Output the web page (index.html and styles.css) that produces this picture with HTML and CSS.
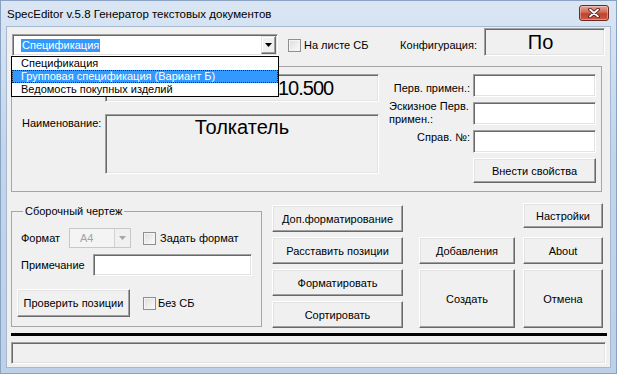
FILE: index.html
```html
<!DOCTYPE html>
<html lang="ru">
<head>
  <meta charset="UTF-8">
  <title>SpecEditor v.5.8</title>
  <link rel="stylesheet" href="styles.css">
</head>
<body>

<div class="window">
  <div class="titlebar">
    <span class="title">SpecEditor v.5.8 Генератор текстовых документов</span>
    <button class="btn-close">
      <svg width="12" height="10" viewBox="0 0 12 10">
        <path d="M2 1.5 L10 8.5 M10 1.5 L2 8.5" stroke="#4a1a12" stroke-width="3.6" stroke-linecap="round"/>
        <path d="M2 1.5 L10 8.5 M10 1.5 L2 8.5" stroke="#fff" stroke-width="1.8" stroke-linecap="round"/>
      </svg>
    </button>
  </div>

  <div class="client">
    <div class="toprow">
      <div class="combo">
        <span class="combo-text"><span class="sel">Спецификация</span></span>
        <span class="combo-btn">
          <svg width="7" height="4" viewBox="0 0 7 4"><path d="M0 0 H7 L3.5 4 Z" fill="#000"/></svg>
        </span>
        <ul class="dropdown">
          <li>Спецификация</li>
          <li class="active">Групповая спецификация (Вариант Б)</li>
          <li>Ведомость покупных изделий</li>
        </ul>
      </div>
      <label class="check top-check"><span class="box"></span>На листе СБ</label>
      <span class="config-label">Конфигурация:</span>
      <div class="sunken config-box">По</div>
    </div>

    <div class="frame props">
      <div class="props-left">
        <span></span>
        <div class="sunken number-box">10.500</div>
        <span class="name-label">Наименование:</span>
        <div class="sunken name-box">Толкатель</div>
      </div>
      <div class="props-right">
        <span class="lbl perv">Перв. примен.:</span>
        <div class="input"></div>
        <span class="lbl eskiz">Эскизное Перв.<br>примен.:</span>
        <div class="input"></div>
        <span class="lbl sprav">Справ. №:</span>
        <div class="input"></div>
        <span></span>
        <button class="btn">Внести свойства</button>
      </div>
    </div>

    <div class="bottom">
      <fieldset class="group">
        <legend>Сборочный чертеж</legend>
        <div class="fs-row r1">
          <span class="fmt-label">Формат</span>
          <div class="combo-off">
            <span class="off-text">А4</span>
            <span class="off-btn">
              <svg width="7" height="4" viewBox="0 0 7 4"><path d="M0 0 H7 L3.5 4 Z" fill="#a6a6a6"/></svg>
            </span>
          </div>
          <label class="check fmt-check"><span class="box"></span>Задать формат</label>
        </div>
        <div class="fs-row r2">
          <span class="note-label">Примечание</span>
          <div class="input note-input"></div>
        </div>
        <div class="fs-row r3">
          <button class="btn check-btn">Проверить позиции</button>
          <label class="check nosb-check"><span class="box"></span>Без СБ</label>
        </div>
      </fieldset>

      <div class="actions">
        <button class="btn a-dop">Доп.форматирование</button>
        <button class="btn a-nastr">Настройки</button>
        <button class="btn a-rass">Расставить позиции</button>
        <button class="btn a-dob">Добавления</button>
        <button class="btn a-about">About</button>
        <button class="btn a-fmt">Форматировать</button>
        <button class="btn a-create">Создать</button>
        <button class="btn a-cancel">Отмена</button>
        <button class="btn a-sort">Сортировать</button>
      </div>
    </div>

    <div class="divider"></div>
    <div class="sunken status"></div>
  </div>
</div>

</body>
</html>
```

FILE: styles.css
```css
* {
  box-sizing: border-box;
}

body {
  margin: 0;
  font-family: "Liberation Sans", Arial, sans-serif;
  font-size: 11px;
  color: #000;
  background: #fff;
}

/* окно */

.window {
  width: 617px;
  height: 374px;
  display: flex;
  flex-direction: column;
  background: linear-gradient(#dae6f4, #c3d5eb 40%, #bdd0e8);
  box-shadow: inset 0 0 0 1px #8aa3c2;
}

.titlebar {
  height: 27px;
  flex: none;
  display: flex;
  align-items: center;
  padding: 0 8px 0 7px;
}

.title {
  font-size: 11.5px;
}

.btn-close {
  margin-left: auto;
  align-self: flex-start;
  margin-top: 5px;
  width: 30px;
  height: 16px;
  padding: 0;
  border: 1px solid #6e2a22;
  border-radius: 3px;
  background: linear-gradient(#e9a493, #d06a57 45%, #c0422f 55%, #cf5b45);
  box-shadow: inset 0 0 0 1px rgba(255, 255, 255, 0.35);
  display: flex;
  align-items: center;
  justify-content: center;
}

.client {
  flex: 1;
  margin: 0 7px 7px;
  background: #f0f0f0;
  box-shadow: 0 0 0 1px #a6b8cf;
  display: flex;
  flex-direction: column;
}

/* общие элементы */

.sunken {
  border: 1px solid;
  border-color: #a0a0a0 #fff #fff #a0a0a0;
  box-shadow: inset 1px 1px 0 #696969, inset -1px -1px 0 #e3e3e3;
  background: #f0f0f0;
}

.input {
  border: 1px solid;
  border-color: #a0a0a0 #fff #fff #a0a0a0;
  box-shadow: inset 1px 1px 0 #696969, inset -1px -1px 0 #e3e3e3;
  background: #fff;
}

.btn {
  font-family: inherit;
  font-size: 11px;
  color: #000;
  background: #f0f0f0;
  border: 1px solid;
  border-color: #fff #696969 #696969 #fff;
  box-shadow: inset -1px -1px 0 #a0a0a0, inset 1px 1px 0 #e3e3e3;
  padding: 0;
}

.frame {
  border: 1px solid #a6a6a6;
}

.check {
  display: flex;
  align-items: center;
  gap: 3px;
}

.check .box {
  width: 13px;
  height: 13px;
  border: 1px solid #8e8f8f;
  background: linear-gradient(135deg, #dcdcdc, #fcfcfc);
  box-shadow: inset 0 0 0 1px #f4f4f4;
}

/* верхняя строка */

.toprow {
  display: flex;
  align-items: flex-end;
  height: 28px;
  margin-top: 1px;
  padding: 0 5px;
}

.combo {
  position: relative;
  width: 266px;
  height: 22px;
  display: flex;
  border: 1px solid;
  border-color: #a0a0a0 #fff #fff #a0a0a0;
  box-shadow: inset 1px 1px 0 #696969, inset -1px -1px 0 #e3e3e3;
  background: #fff;
  padding: 1px;
}

.combo-text {
  flex: 1;
  display: flex;
  align-items: center;
  padding-left: 7px;
}

.sel {
  background: #3399ff;
  color: #fff;
  padding: 0 1px;
  line-height: 13px;
}

.combo-btn {
  width: 15px;
  display: flex;
  align-items: center;
  justify-content: center;
  background: #f0f0f0;
  border: 1px solid;
  border-color: #e3e3e3 #696969 #696969 #e3e3e3;
  box-shadow: inset -1px -1px 0 #a0a0a0, inset 1px 1px 0 #fff;
}

.dropdown {
  position: absolute;
  left: -2px;
  top: calc(100% + 1px);
  width: 268px;
  height: 41px;
  margin: 0;
  padding: 0;
  list-style: none;
  background: #fff;
  border: 1px solid #000;
  z-index: 2;
}

.dropdown li {
  height: 13px;
  line-height: 13px;
  padding-left: 9px;
}

.dropdown li.active {
  background: #3399ff;
  color: #fff;
  outline: 1px dotted #1b2a3a;
  outline-offset: -1px;
}

.top-check {
  height: 22px;
  margin-left: 10px;
}

.config-label {
  height: 22px;
  display: flex;
  align-items: center;
  margin-left: auto;
  margin-right: 7px;
}

.config-box {
  width: 121px;
  height: 28px;
  display: flex;
  align-items: center;
  justify-content: center;
  font-size: 20px;
  padding-right: 8px;
}

/* свойства */

.props {
  margin: 10px 0 0 4px;
  width: 591px;
  height: 126px;
  padding-top: 7px;
  display: flex;
  align-items: flex-start;
}

.props-left {
  display: grid;
  grid-template-columns: 93px 274px;
  grid-template-rows: 28px 60px;
  row-gap: 12px;
}

.number-box {
  display: flex;
  align-items: center;
  padding-left: 172px;
  font-size: 20px;
  letter-spacing: -1px;
}

.name-label {
  padding: 3px 0 0 10px;
}

.name-box {
  font-size: 20px;
  text-align: center;
  padding-top: 1px;
}

.props-right {
  margin-left: 10px;
  display: grid;
  grid-template-columns: 81px 123px;
  grid-template-rows: 23px 23px 23px 25px;
  column-gap: 3px;
  row-gap: 5px;
}

.lbl {
  text-align: right;
  white-space: nowrap;
}

.lbl.perv {
  align-self: center;
  padding-top: 4px;
}

.lbl.eskiz {
  text-align: left;
  line-height: 13px;
  margin-top: -2px;
}

.lbl.sprav {
  padding-top: 1px;
}

/* нижняя часть */

.bottom {
  display: flex;
  align-items: flex-start;
  margin-top: 11px;
}

.group {
  margin: 2px 0 0 4px;
  width: 251px;
  min-width: 0;
  padding: 0 0 9px 0;
  border: 1px solid #a6a6a6;
}

.group legend {
  margin-left: 11px;
  padding: 0 2px;
  line-height: 13px;
}

.fs-row {
  display: flex;
  align-items: center;
}

.fs-row.r1 {
  margin-top: 10px;
  height: 20px;
  padding-left: 9px;
}

.fs-row.r2 {
  margin-top: 6px;
  height: 22px;
  padding-left: 9px;
}

.fs-row.r3 {
  margin-top: 13px;
  height: 28px;
  padding-left: 5px;
}

.fmt-label {
  width: 48px;
}

.combo-off {
  width: 62px;
  height: 20px;
  display: flex;
  border: 1px solid #c5c8ca;
  background: #f4f4f4;
}

.off-text {
  flex: 1;
  color: #a3a3a3;
  padding-left: 10px;
  display: flex;
  align-items: center;
}

.off-btn {
  width: 16px;
  display: flex;
  align-items: center;
  justify-content: center;
  border-left: 1px solid #d2d2d2;
  background: #f0f0f0;
}

.fmt-check {
  margin-left: 12px;
  gap: 4px;
}

.note-label {
  width: 72px;
}

.note-input {
  width: 159px;
  height: 22px;
}

.check-btn {
  width: 113px;
  height: 28px;
}

.nosb-check {
  margin-left: 13px;
  gap: 2px;
}

.actions {
  margin: 2px 0 0 10px;
  display: grid;
  grid-template-columns: 139px 96px 80px;
  grid-template-rows: repeat(4, 27px);
  column-gap: 8px;
  row-gap: 5px;
}

.a-dop, .a-rass, .a-fmt, .a-sort {
  grid-column: 1;
  width: 131px;
}

.a-dop { grid-row: 1; }
.a-rass { grid-row: 2; }
.a-fmt { grid-row: 3; }
.a-sort { grid-row: 4; }

.a-nastr {
  grid-column: 3;
  grid-row: 1;
  margin-top: -2px;
  height: 25px;
}

.a-dob { grid-column: 2; grid-row: 2; }
.a-about { grid-column: 3; grid-row: 2; }
.a-create { grid-column: 2; grid-row: 3 / 5; }
.a-cancel { grid-column: 3; grid-row: 3 / 5; }

.divider {
  margin: 5px 0 0 4px;
  width: 596px;
  height: 3px;
  background: #000;
}

.status {
  margin: 6px 0 0 4px;
  width: 595px;
  height: 22px;
}
```
